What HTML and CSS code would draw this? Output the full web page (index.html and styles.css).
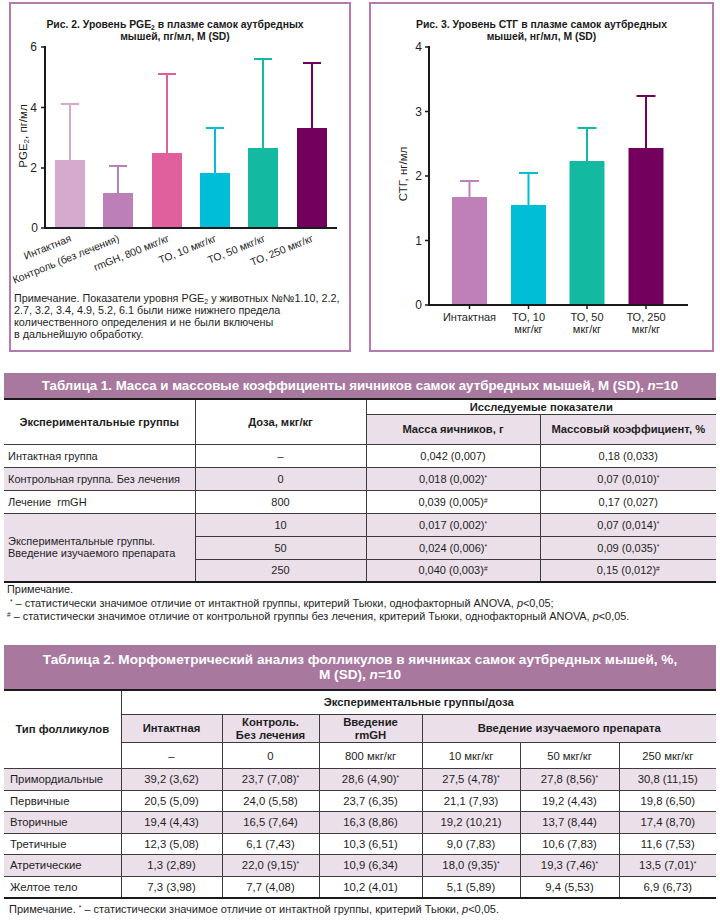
FILE: index.html
```html
<!DOCTYPE html>
<html lang="ru">
<head>
<meta charset="utf-8">
<title>Рис. 2, Рис. 3, Таблицы 1–2</title>
<link rel="stylesheet" href="styles.css">
</head>
<body>
<div class="charts">
  <section class="chart chart1">
    <div class="ctitle ctitle1">Рис. 2. Уровень PGE<sub>2</sub> в плазме самок аутбредных<br>мышей, пг/мл, M (SD)</div>
    <svg class="plot" width="338" height="246" viewBox="11 44 338 246">
      <g class="ylab"><text transform="translate(27,136) rotate(-90)" text-anchor="middle">PGE<tspan class="sub" dy="2">2</tspan><tspan dy="-2">, пг/мл</tspan></text></g>
      <g class="ticks">
        <line x1="41" y1="47" x2="45" y2="47"/><line x1="41" y1="107.5" x2="45" y2="107.5"/><line x1="41" y1="168" x2="45" y2="168"/><line x1="41" y1="228" x2="45" y2="228"/>
      </g>
      <g class="tl">
        <text x="37" y="51" text-anchor="end">6</text>
        <text x="37" y="111.5" text-anchor="end">4</text>
        <text x="37" y="172" text-anchor="end">2</text>
        <text x="38" y="232" text-anchor="end">0</text>
      </g>
      <g class="err">
        <path stroke="#d6a9cf" d="M70 160V104M61 104H79"/>
        <path stroke="#bd7fb8" d="M118 193V166M109 166H127"/>
        <path stroke="#e0609e" d="M167 153V74M158 74H176"/>
        <path stroke="#00bed8" d="M215 173V128M206 128H224"/>
        <path stroke="#14b9a1" d="M263 148V59M254 59H272"/>
        <path stroke="#74005e" d="M312 128V63M303 63H321"/>
      </g>
      <rect x="55" y="160" width="30" height="68" fill="#d6a9cf"/>
      <rect x="103" y="193" width="30" height="35" fill="#bd7fb8"/>
      <rect x="152" y="153" width="30" height="75" fill="#e0609e"/>
      <rect x="200" y="173" width="30" height="55" fill="#00bed8"/>
      <rect x="248" y="148" width="30" height="80" fill="#14b9a1"/>
      <rect x="297" y="128" width="30" height="100" fill="#74005e"/>
      <path class="axis" d="M45 46V229M44 228H337"/>
      <g class="xl">
        <text transform="translate(72,241) rotate(-22)" text-anchor="end">Интактная</text>
        <text transform="translate(120,241) rotate(-22)" text-anchor="end">Контроль (без лечения)</text>
        <text transform="translate(170,241) rotate(-22)" text-anchor="end">rmGH, 800 мкг/кг</text>
        <text transform="translate(217,241) rotate(-22)" text-anchor="end">ТО, 10 мкг/кг</text>
        <text transform="translate(266,241) rotate(-22)" text-anchor="end">ТО, 50 мкг/кг</text>
        <text transform="translate(314,241) rotate(-22)" text-anchor="end">ТО, 250 мкг/кг</text>
      </g>
    </svg>
    <p class="cnote">Примечание. Показатели уровня PGE<sub>2</sub> у животных №№1.10, 2.2,<br>2.7, 3.2, 3.4, 4.9, 5.2, 6.1 были ниже нижнего предела<br>количественного определения и не были включены<br>в дальнейшую обработку.</p>
  </section>
  <section class="chart chart2">
    <div class="ctitle">Рис. 3. Уровень СТГ в плазме самок аутбредных<br>мышей, нг/мл, M (SD)</div>
    <svg class="plot" width="341" height="300" viewBox="371 44 341 300">
      <g class="ylab"><text transform="translate(407,174) rotate(-90)" text-anchor="middle">СТГ, нг/мл</text></g>
      <g class="ticks">
        <line x1="425" y1="47" x2="429" y2="47"/><line x1="425" y1="111.5" x2="429" y2="111.5"/><line x1="425" y1="176" x2="429" y2="176"/><line x1="425" y1="240.5" x2="429" y2="240.5"/><line x1="425" y1="305" x2="429" y2="305"/>
        <line x1="469.5" y1="305" x2="469.5" y2="309"/><line x1="528.5" y1="305" x2="528.5" y2="309"/><line x1="587" y1="305" x2="587" y2="309"/><line x1="646" y1="305" x2="646" y2="309"/>
      </g>
      <g class="tl">
        <text x="422" y="51" text-anchor="end">4</text>
        <text x="422" y="115.5" text-anchor="end">3</text>
        <text x="422" y="180" text-anchor="end">2</text>
        <text x="422" y="244.5" text-anchor="end">1</text>
        <text x="422" y="309" text-anchor="end">0</text>
      </g>
      <g class="err">
        <path stroke="#bf80b9" d="M469.5 197V181M460 181H479"/>
        <path stroke="#00bed6" d="M528.5 205V173M519 173H538"/>
        <path stroke="#14b9a1" d="M587 161V128M577.5 128H596.5"/>
        <path stroke="#74005d" d="M646 148V96M636.5 96H655.5"/>
      </g>
      <rect x="452" y="197" width="35" height="108" fill="#bf80b9"/>
      <rect x="511" y="205" width="35" height="100" fill="#00bed6"/>
      <rect x="569.5" y="161" width="35" height="144" fill="#14b9a1"/>
      <rect x="628.5" y="148" width="35" height="157" fill="#74005d"/>
      <path class="axis" d="M429 46V306M428 305H688"/>
      <g class="xl2">
        <text x="469.5" y="321" text-anchor="middle">Интактная</text>
        <text x="528.5" y="321" text-anchor="middle">ТО, 10</text>
        <text x="528.5" y="332.5" text-anchor="middle">мкг/кг</text>
        <text x="587" y="321" text-anchor="middle">ТО, 50</text>
        <text x="587" y="332.5" text-anchor="middle">мкг/кг</text>
        <text x="646" y="321" text-anchor="middle">ТО, 250</text>
        <text x="646" y="332.5" text-anchor="middle">мкг/кг</text>
      </g>
    </svg>
  </section>
</div>

<section class="tsec tsec1">
  <div class="band">Таблица 1. Масса и массовые коэффициенты яичников самок аутбредных мышей, M (SD), <i>n</i>=10</div>
  <table class="t1">
    <colgroup><col class="a1"><col class="a2"><col class="a3"><col class="a4"></colgroup>
    <tr class="h1"><th rowspan="2">Экспериментальные группы</th><th rowspan="2">Доза, мкг/кг</th><th colspan="2">Исследуемые показатели</th></tr>
    <tr class="h2"><th class="lav">Масса яичников, г</th><th class="lav">Массовый коэффициент, %</th></tr>
    <tr class="r"><td class="l">Интактная группа</td><td>–</td><td>0,042 (0,007)</td><td>0,18 (0,033)</td></tr>
    <tr class="r lav"><td class="l">Контрольная группа. Без лечения</td><td>0</td><td>0,018 (0,002)<sup>*</sup></td><td>0,07 (0,010)<sup>*</sup></td></tr>
    <tr class="r"><td class="l">Лечение&nbsp; rmGH</td><td>800</td><td>0,039 (0,005)<sup>#</sup></td><td>0,17 (0,027)</td></tr>
    <tr class="r lav"><td class="l ml" rowspan="3">Экспериментальные группы.<br>Введение изучаемого препарата</td><td>10</td><td>0,017 (0,002)<sup>*</sup></td><td>0,07 (0,014)<sup>*</sup></td></tr>
    <tr class="r lav"><td>50</td><td>0,024 (0,006)<sup>*</sup></td><td>0,09 (0,035)<sup>*</sup></td></tr>
    <tr class="r lav"><td>250</td><td>0,040 (0,003)<sup>#</sup></td><td>0,15 (0,012)<sup>#</sup></td></tr>
  </table>
  <p class="tnote">Примечание.<br>&nbsp;<sup>*</sup> – статистически значимое отличие от интактной группы, критерий Тьюки, однофакторный ANOVA, <i>p</i>&lt;0,05;<br><sup>#</sup> – статистически значимое отличие от контрольной группы без лечения, критерий Тьюки, однофакторный ANOVA, <i>p</i>&lt;0,05.</p>
</section>

<section class="tsec tsec2">
  <div class="band band2">Таблица 2. Морфометрический анализ фолликулов в яичниках самок аутбредных мышей, %,<br>M (SD), <i>n</i>=10</div>
  <table class="t2">
    <colgroup><col class="b1"><col class="b2"><col class="b3"><col class="b4"><col class="b5"><col class="b6"><col class="b7"></colgroup>
    <tr class="g1"><th rowspan="3">Тип фолликулов</th><th colspan="6">Экспериментальные группы/доза</th></tr>
    <tr class="g2"><th class="lav">Интактная</th><th class="lav">Контроль.<br>Без лечения</th><th class="lav">Введение<br>rmGH</th><th class="lav" colspan="3">Введение изучаемого препарата</th></tr>
    <tr class="g3"><td>–</td><td>0</td><td>800 мкг/кг</td><td>10 мкг/кг</td><td>50 мкг/кг</td><td>250 мкг/кг</td></tr>
    <tr class="d lav"><td class="l">Примордиальные</td><td>39,2 (3,62)</td><td>23,7 (7,08)<sup>*</sup></td><td>28,6 (4,90)<sup>*</sup></td><td>27,5 (4,78)<sup>*</sup></td><td>27,8 (8,56)<sup>*</sup></td><td>30,8 (11,15)</td></tr>
    <tr class="d dd"><td class="l">Первичные</td><td>20,5 (5,09)</td><td>24,0 (5,58)</td><td>23,7 (6,35)</td><td>21,1 (7,93)</td><td>19,2 (4,43)</td><td>19,8 (6,50)</td></tr>
    <tr class="d lav"><td class="l">Вторичные</td><td>19,4 (4,43)</td><td>16,5 (7,64)</td><td>16,3 (8,86)</td><td>19,2 (10,21)</td><td>13,7 (8,44)</td><td>17,4 (8,70)</td></tr>
    <tr class="d dd"><td class="l">Третичные</td><td>12,3 (5,08)</td><td>6,1 (7,43)</td><td>10,3 (6,51)</td><td>9,0 (7,83)</td><td>10,6 (7,83)</td><td>11,6 (7,53)</td></tr>
    <tr class="d lav"><td class="l">Атретические</td><td>1,3 (2,89)</td><td>22,0 (9,15)<sup>*</sup></td><td>10,9 (6,34)</td><td>18,0 (9,35)<sup>*</sup></td><td>19,3 (7,46)<sup>*</sup></td><td>13,5 (7,01)<sup>*</sup></td></tr>
    <tr class="d dd"><td class="l">Желтое тело</td><td>7,3 (3,98)</td><td>7,7 (4,08)</td><td>10,2 (4,01)</td><td>5,1 (5,89)</td><td>9,4 (5,53)</td><td>6,9 (6,73)</td></tr>
  </table>
  <p class="tnote2">Примечание. <sup>*</sup> – статистически значимое отличие от интактной группы, критерий Тьюки, <i>p</i>&lt;0,05.</p>
</section>
</body>
</html>
```

FILE: styles.css
```css
* { box-sizing: border-box; }
html, body { margin: 0; padding: 0; background: #fff; }
body {
  width: 720px;
  font-family: "Liberation Sans", Arial, sans-serif;
  color: #1e1e1e;
}

/* charts */
.charts {
  display: flex;
  gap: 18px;
  padding: 2px 0 0 9px;
}
.chart {
  border: 2px solid #b67ab1;
  height: 350px;
  background: #fff;
}
.chart1 { width: 342px; }
.chart2 { width: 345px; }

.ctitle {
  font-weight: bold;
  font-size: 10.4px;
  line-height: 12px;
  text-align: center;
  padding-top: 15px;
  height: 37px;
  margin-bottom: 3px;
  color: #1a1a1a;
}
.ctitle1 { padding-right: 10px; }
.ctitle sub, .cnote sub { font-size: 0.65em; line-height: 0; vertical-align: -0.3em; }

.plot { display: block; overflow: visible; }
.plot text { font-family: "Liberation Sans", Arial, sans-serif; fill: #1e1e1e; }
.tl text { font-size: 12px; }
.ylab text { font-size: 11.5px; }
.ylab .sub { font-size: 8px; }
.xl text { font-size: 10.4px; }
.xl2 text { font-size: 11px; }
.ticks line { stroke: #1a1a1a; stroke-width: 1.5; }
.axis { stroke: #1a1a1a; stroke-width: 2; fill: none; }
.err path { stroke-width: 2; fill: none; }

.cnote {
  margin: 2px 0 0 0;
  padding-left: 3px;
  font-size: 10.8px;
  line-height: 12px;
  color: #1e1e1e;
}

/* tables */
.tsec { margin: 0 4px; }
.tsec1 { margin-top: 21px; }
.tsec2 { margin-top: 21px; }

.band {
  background: #a8789f;
  color: #fff;
  font-weight: bold;
  font-size: 13.3px;
  line-height: 25px;
  height: 25px;
  text-align: center;
}
.band2 {
  font-size: 13.6px;
  line-height: 15px;
  height: 44px;
  padding-top: 7px;
}

table {
  border-collapse: collapse;
  table-layout: fixed;
  width: 712px;
  border-top: 2px solid #1a1a1a;
  border-bottom: 2px solid #1a1a1a;
  border-left: hidden;
  border-right: hidden;
}
th, td {
  border: 1px solid #3c3c3c;
  padding: 0;
  text-align: center;
  vertical-align: middle;
  color: #1e1e1e;
}
th { font-weight: bold; }
.lav, tr.lav td, th.lav { background: #ebe0ea; }
td.l { text-align: left; }
sup { font-size: 0.6em; line-height: 0; vertical-align: 0.45em; }

.t1 th, .t1 td { font-size: 11px; }
.t1 th { font-size: 11.2px; }
.t1 td.l { padding-left: 4px; }
.t1 td.ml { line-height: 12.5px; }
.a1 { width: 191px; } .a2 { width: 171px; } .a3 { width: 174px; } .a4 { width: 176px; }
.t1 .h1 th { height: 15px; }
.t1 .h2 th { height: 30px; }
.t1 tr.r td { height: 23px; }

.tnote {
  margin: 0;
  padding-left: 3px;
  font-size: 10.9px;
  line-height: 13.5px;
}

.t2 th, .t2 td { font-size: 11.3px; }
.t2 td.l { padding-left: 6px; }
.t2 th { line-height: 13px; }
.b1 { width: 117px; } .b2 { width: 101px; } .b3 { width: 97px; } .b4 { width: 103px; }
.b5 { width: 98px; } .b6 { width: 99px; } .b7 { width: 97px; }
.t2 .g1 th { height: 25px; }
.t2 .g2 th { height: 28px; }
.t2 .g3 td { height: 26px; }
.t2 tr.d td { height: 21.5px; }

.tnote2 {
  margin: 0;
  padding: 3px 0 0 5px;
  font-size: 11px;
  line-height: 14px;
}
```
